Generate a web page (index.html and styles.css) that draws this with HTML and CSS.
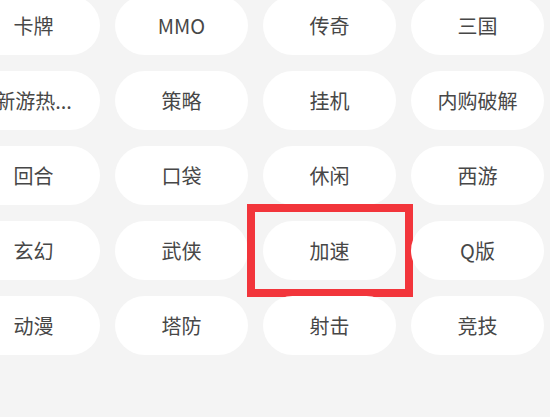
FILE: index.html
```html
<!DOCTYPE html>
<html lang="zh-CN">
<head>
    <meta charset="UTF-8">
    <meta name="viewport" content="width=device-width, initial-scale=1.0">
    <title>分类标签</title>
    <link rel="stylesheet" href="styles.css">
</head>
<body>

<div class="tag-grid">
    <div class="tag">卡牌</div>
    <div class="tag">MMO</div>
    <div class="tag">传奇</div>
    <div class="tag">三国</div>

    <div class="tag">新游热...</div>
    <div class="tag">策略</div>
    <div class="tag">挂机</div>
    <div class="tag">内购破解</div>

    <div class="tag">回合</div>
    <div class="tag">口袋</div>
    <div class="tag">休闲</div>
    <div class="tag">西游</div>

    <div class="tag">玄幻</div>
    <div class="tag">武侠</div>
    <div class="tag marked">加速</div>
    <div class="tag">Q版</div>

    <div class="tag">动漫</div>
    <div class="tag">塔防</div>
    <div class="tag">射击</div>
    <div class="tag">竞技</div>
</div>

</body>
</html>
```

FILE: styles.css
```css
html, body {
    height: 100%;
}
body {
    margin: 0;
    background-color: #f4f4f4;
    font-family: "Noto Sans CJK SC", "Noto Sans", sans-serif;
    overflow: hidden;
}
.tag-grid {
    display: grid;
    grid-template-columns: repeat(4, 133px);
    grid-auto-rows: 59px;
    column-gap: 15px;
    row-gap: 16px;
    margin-left: -33px;
    margin-top: -4px;
}
.tag {
    position: relative;
    display: flex;
    align-items: center;
    justify-content: center;
    background-color: #fff;
    border-radius: 30px;
    font-size: 20px;
    color: #474747;
    white-space: nowrap;
}
/* 红框标注 */
.tag.marked::after {
    content: "";
    position: absolute;
    top: -17px;
    left: -16px;
    right: -17px;
    bottom: -17px;
    border: 8px solid #f2353b;
}
```
